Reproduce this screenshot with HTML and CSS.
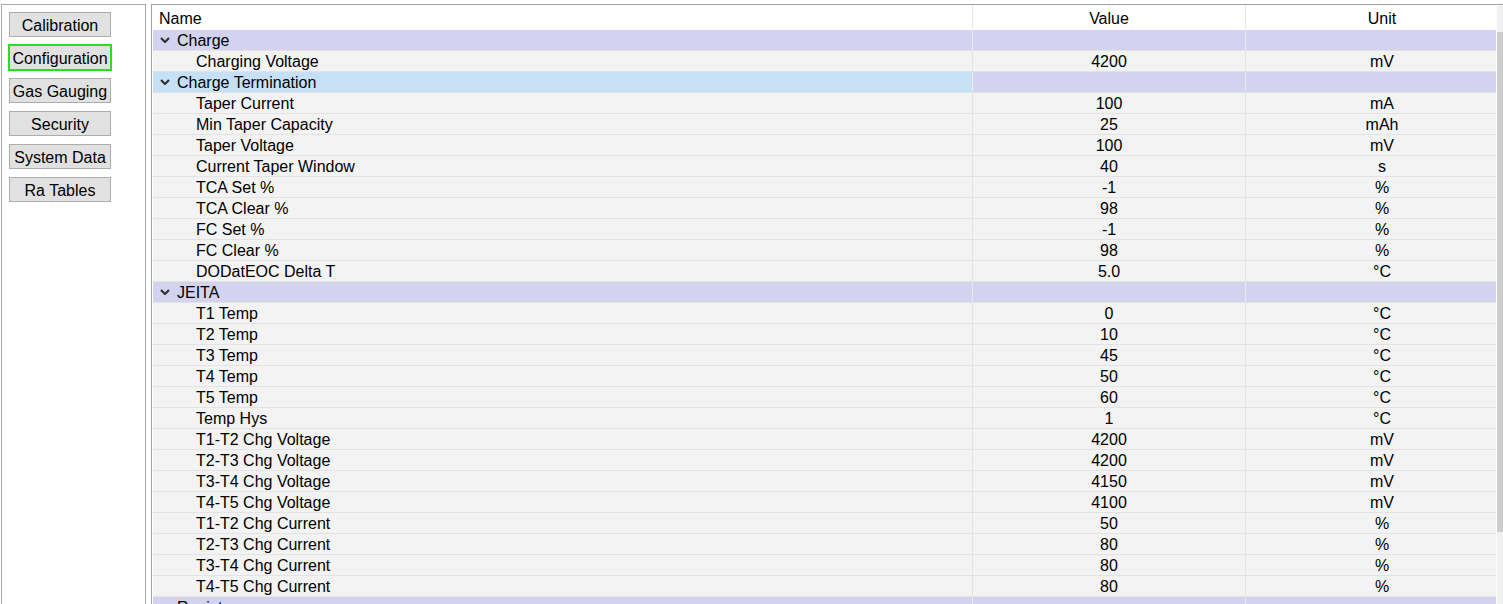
FILE: index.html
```html
<!DOCTYPE html>
<html lang="en">
<head>
<meta charset="UTF-8">
<meta name="viewport" content="width=device-width, initial-scale=1.0">
<title>Configuration</title>
<link rel="stylesheet" href="styles.css">
</head>
<body>
  <div class="app">
    <div class="sidebar">
      <button class="nav-btn">Calibration</button>
      <button class="nav-btn active">Configuration</button>
      <button class="nav-btn">Gas Gauging</button>
      <button class="nav-btn">Security</button>
      <button class="nav-btn">System Data</button>
      <button class="nav-btn">Ra Tables</button>
    </div>
    <div class="panel">
      <div class="grid-view">
        <div class="row head">
          <div class="cell name">Name</div>
          <div class="cell">Value</div>
          <div class="cell">Unit</div>
        </div>

        <div class="row group">
          <div class="cell name"><svg class="chev" width="10" height="6" viewBox="0 0 10 6"><polyline points="1,1 5,5 9,1"/></svg>Charge</div>
          <div class="cell"></div>
          <div class="cell"></div>
        </div>
        <div class="row"><div class="cell name">Charging Voltage</div><div class="cell">4200</div><div class="cell">mV</div></div>

        <div class="row group">
          <div class="cell name selected"><svg class="chev" width="10" height="6" viewBox="0 0 10 6"><polyline points="1,1 5,5 9,1"/></svg>Charge Termination</div>
          <div class="cell"></div>
          <div class="cell"></div>
        </div>
        <div class="row"><div class="cell name">Taper Current</div><div class="cell">100</div><div class="cell">mA</div></div>
        <div class="row"><div class="cell name">Min Taper Capacity</div><div class="cell">25</div><div class="cell">mAh</div></div>
        <div class="row"><div class="cell name">Taper Voltage</div><div class="cell">100</div><div class="cell">mV</div></div>
        <div class="row"><div class="cell name">Current Taper Window</div><div class="cell">40</div><div class="cell">s</div></div>
        <div class="row"><div class="cell name">TCA Set %</div><div class="cell">-1</div><div class="cell">%</div></div>
        <div class="row"><div class="cell name">TCA Clear %</div><div class="cell">98</div><div class="cell">%</div></div>
        <div class="row"><div class="cell name">FC Set %</div><div class="cell">-1</div><div class="cell">%</div></div>
        <div class="row"><div class="cell name">FC Clear %</div><div class="cell">98</div><div class="cell">%</div></div>
        <div class="row"><div class="cell name">DODatEOC Delta T</div><div class="cell">5.0</div><div class="cell">°C</div></div>

        <div class="row group">
          <div class="cell name"><svg class="chev" width="10" height="6" viewBox="0 0 10 6"><polyline points="1,1 5,5 9,1"/></svg>JEITA</div>
          <div class="cell"></div>
          <div class="cell"></div>
        </div>
        <div class="row"><div class="cell name">T1 Temp</div><div class="cell">0</div><div class="cell">°C</div></div>
        <div class="row"><div class="cell name">T2 Temp</div><div class="cell">10</div><div class="cell">°C</div></div>
        <div class="row"><div class="cell name">T3 Temp</div><div class="cell">45</div><div class="cell">°C</div></div>
        <div class="row"><div class="cell name">T4 Temp</div><div class="cell">50</div><div class="cell">°C</div></div>
        <div class="row"><div class="cell name">T5 Temp</div><div class="cell">60</div><div class="cell">°C</div></div>
        <div class="row"><div class="cell name">Temp Hys</div><div class="cell">1</div><div class="cell">°C</div></div>
        <div class="row"><div class="cell name">T1-T2 Chg Voltage</div><div class="cell">4200</div><div class="cell">mV</div></div>
        <div class="row"><div class="cell name">T2-T3 Chg Voltage</div><div class="cell">4200</div><div class="cell">mV</div></div>
        <div class="row"><div class="cell name">T3-T4 Chg Voltage</div><div class="cell">4150</div><div class="cell">mV</div></div>
        <div class="row"><div class="cell name">T4-T5 Chg Voltage</div><div class="cell">4100</div><div class="cell">mV</div></div>
        <div class="row"><div class="cell name">T1-T2 Chg Current</div><div class="cell">50</div><div class="cell">%</div></div>
        <div class="row"><div class="cell name">T2-T3 Chg Current</div><div class="cell">80</div><div class="cell">%</div></div>
        <div class="row"><div class="cell name">T3-T4 Chg Current</div><div class="cell">80</div><div class="cell">%</div></div>
        <div class="row"><div class="cell name">T4-T5 Chg Current</div><div class="cell">80</div><div class="cell">%</div></div>

        <div class="row group">
          <div class="cell name"><svg class="chev" width="10" height="6" viewBox="0 0 10 6"><polyline points="1,1 5,5 9,1"/></svg>Registers</div>
          <div class="cell"></div>
          <div class="cell"></div>
        </div>
      </div>
      <div class="scrollbar">
        <div class="thumb"></div>
      </div>
    </div>
  </div>
</body>
</html>
```

FILE: styles.css
```css
body, html {
  margin: 0;
  padding: 0;
  height: 100%;
  overflow: hidden;
  background-color: white;
  font-family: "Liberation Sans", Arial, sans-serif;
  font-size: 16px;
  color: black;
}

.app {
  display: flex;
  gap: 5px;
  padding: 4px 0 0 1px;
}

.sidebar {
  flex: none;
  width: 145px;
  height: 640px;
  box-sizing: border-box;
  border: 1px solid #a9a9a9;
  padding: 7px;
  display: flex;
  flex-direction: column;
  gap: 8px;
}

.nav-btn {
  width: 102px;
  height: 25px;
  margin: 0;
  padding: 2px 0 0 0;
  box-sizing: border-box;
  background-color: #e1e1e1;
  border: 1px solid #adadad;
  font-family: inherit;
  font-size: 16px;
  color: black;
  line-height: 20px;
}

.nav-btn.active {
  border-color: #22e022;
  outline: 1px solid #22e022;
}

.panel {
  flex: none;
  width: 1380px;
  height: 640px;
  box-sizing: border-box;
  border-top: 1px solid #a0a0a0;
  border-left: 1px solid #a0a0a0;
  padding-left: 1px;
  display: flex;
  gap: 1px;
}

.grid-view {
  flex: none;
  width: 1343px;
  overflow: hidden;
}

.row {
  display: grid;
  grid-template-columns: 820px 273px 273px;
  width: 1366px;
  height: 21px;
  box-sizing: border-box;
  border-bottom: 1px solid #e3e3e3;
  background-color: #f3f3f3;
}

.row.head {
  height: 25px;
  border-bottom: none;
  background-color: white;
}

.row.group {
  background-color: #d3d3ef;
}

.cell {
  box-sizing: border-box;
  border-right: 1px solid #e3e3e3;
  text-align: center;
  padding-top: 1px;
  line-height: 20px;
  white-space: nowrap;
  overflow: hidden;
}

.row.head .cell {
  padding-top: 0;
  line-height: 27px;
  border-right-color: #e6e6e6;
}

.row.group .cell {
  border-right-color: #e9e9f3;
}

.cell.name {
  text-align: left;
  padding-left: 43px;
}

.row.head .cell.name {
  padding-left: 6px;
}

.row.group .cell.name {
  padding-left: 7px;
}

.cell.selected {
  background-color: #c6e0f5;
}

.chev {
  display: inline-block;
  vertical-align: top;
  margin: 6px 7px 0 0;
  fill: none;
  stroke: #333;
  stroke-width: 2.2;
}

.scrollbar {
  flex: none;
  width: 17px;
  margin-top: 1px;
  background-color: #f0f0f0;
}

.thumb {
  margin-top: 26px;
  height: 500px;
  background-color: #cdcdcd;
}
```
